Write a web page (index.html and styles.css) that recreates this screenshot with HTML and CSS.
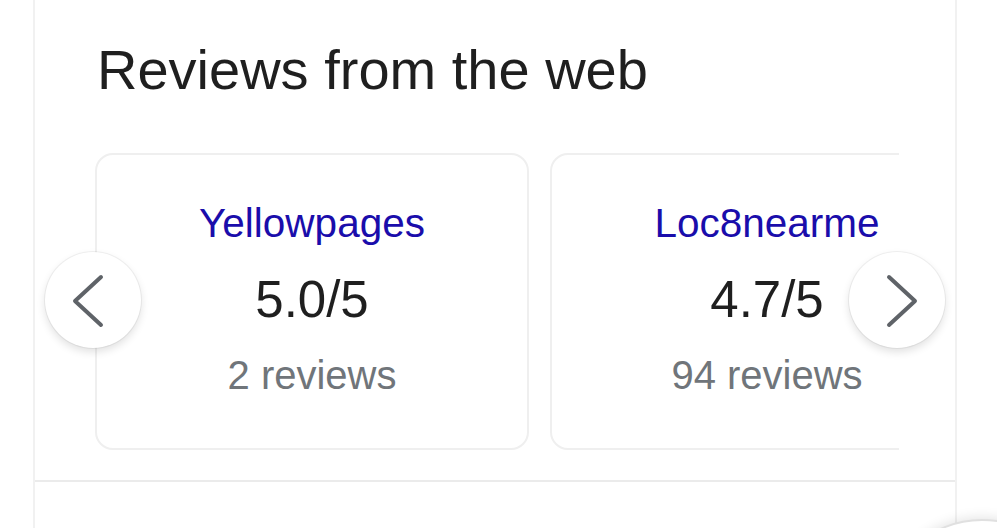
FILE: index.html
```html
<!DOCTYPE html>
<html lang="en">
<head>
<meta charset="utf-8">
<title>Reviews from the web</title>
<link rel="stylesheet" href="styles.css">
</head>
<body>
<div class="page">
  <section class="panel">
    <h2 class="title">Reviews from the web</h2>
    <div class="carousel">
      <div class="viewport">
        <div class="track">
          <a class="card" href="#">
            <span class="source">Yellowpages</span>
            <span class="rating">5.0/5</span>
            <span class="count">2 reviews</span>
          </a>
          <a class="card" href="#">
            <span class="source">Loc8nearme</span>
            <span class="rating">4.7/5</span>
            <span class="count">94 reviews</span>
          </a>
        </div>
      </div>
      <button class="nav nav-prev" aria-label="Previous">
        <svg viewBox="0 0 96 96" width="96" height="96"><path d="M56 25 L30 49 L56 73" fill="none" stroke="#5f6368" stroke-width="4" stroke-linecap="round" stroke-linejoin="round"/></svg>
      </button>
      <button class="nav nav-next" aria-label="Next">
        <svg viewBox="0 0 96 96" width="96" height="96"><path d="M40 25 L66 49 L40 73" fill="none" stroke="#5f6368" stroke-width="4" stroke-linecap="round" stroke-linejoin="round"/></svg>
      </button>
    </div>
    <div class="divider"></div>
  </section>
  <div class="fab"></div>
</div>
</body>
</html>
```
FILE: styles.css
```css
html, body {
  margin: 0;
  padding: 0;
  background: #fff;
  height: 100%;
  overflow: hidden;
}
body {
  font-family: Arial, "Liberation Sans", Helvetica, sans-serif;
  color: #202124;
}
.page {
  position: relative;
  height: 528px;
  overflow: hidden;
}
.panel {
  margin-left: 33px;
  width: 924px;
  border-left: 2px solid #f1f1f1;
  border-right: 2px solid #f1f1f1;
  height: 528px;
  padding-top: 38px;
  box-sizing: border-box;
}
.title {
  margin: 0 0 51px 0;
  padding-left: 62px;
  font-size: 56px;
  line-height: 64px;
  font-weight: 400;
  color: #1f1f1f;
}
.carousel {
  position: relative;
}
.viewport {
  margin-left: 60px;
  width: 804px;
  overflow: hidden;
}
.track {
  display: flex;
  gap: 21px;
}
.card {
  flex: 0 0 434px;
  height: 297px;
  box-sizing: border-box;
  border: 2px solid #efefef;
  border-radius: 18px;
  padding-top: 44px;
  display: flex;
  flex-direction: column;
  align-items: center;
  text-decoration: none;
}
.source {
  font-size: 40.5px;
  line-height: 48px;
  color: #1a0dab;
}
.rating {
  margin-top: 23px;
  font-size: 51px;
  line-height: 60px;
  color: #1f1f1f;
}
.count {
  margin-top: 21px;
  font-size: 40px;
  line-height: 48px;
  color: #70757a;
}
.nav {
  position: absolute;
  top: 99px;
  width: 96px;
  height: 96px;
  padding: 0;
  border: none;
  border-radius: 50%;
  background: #fff;
  box-shadow: 0 0 0 1px rgba(0,0,0,0.05), 0 4px 8px rgba(0,0,0,0.12);
  display: flex;
  align-items: center;
  justify-content: center;
  cursor: pointer;
}
.nav svg {
  display: block;
}
.nav-prev {
  left: 10px;
}
.nav-next {
  right: 10px;
}
.divider {
  margin-top: 30px;
  height: 2px;
  background: #ebebeb;
}
.fab {
  position: absolute;
  left: 880px;
  top: 519px;
  width: 200px;
  height: 200px;
  border-radius: 50%;
  border: 2px solid #e0e0e0;
  background: #fff;
  box-shadow: 0 -2px 12px rgba(0,0,0,0.10);
}
```
